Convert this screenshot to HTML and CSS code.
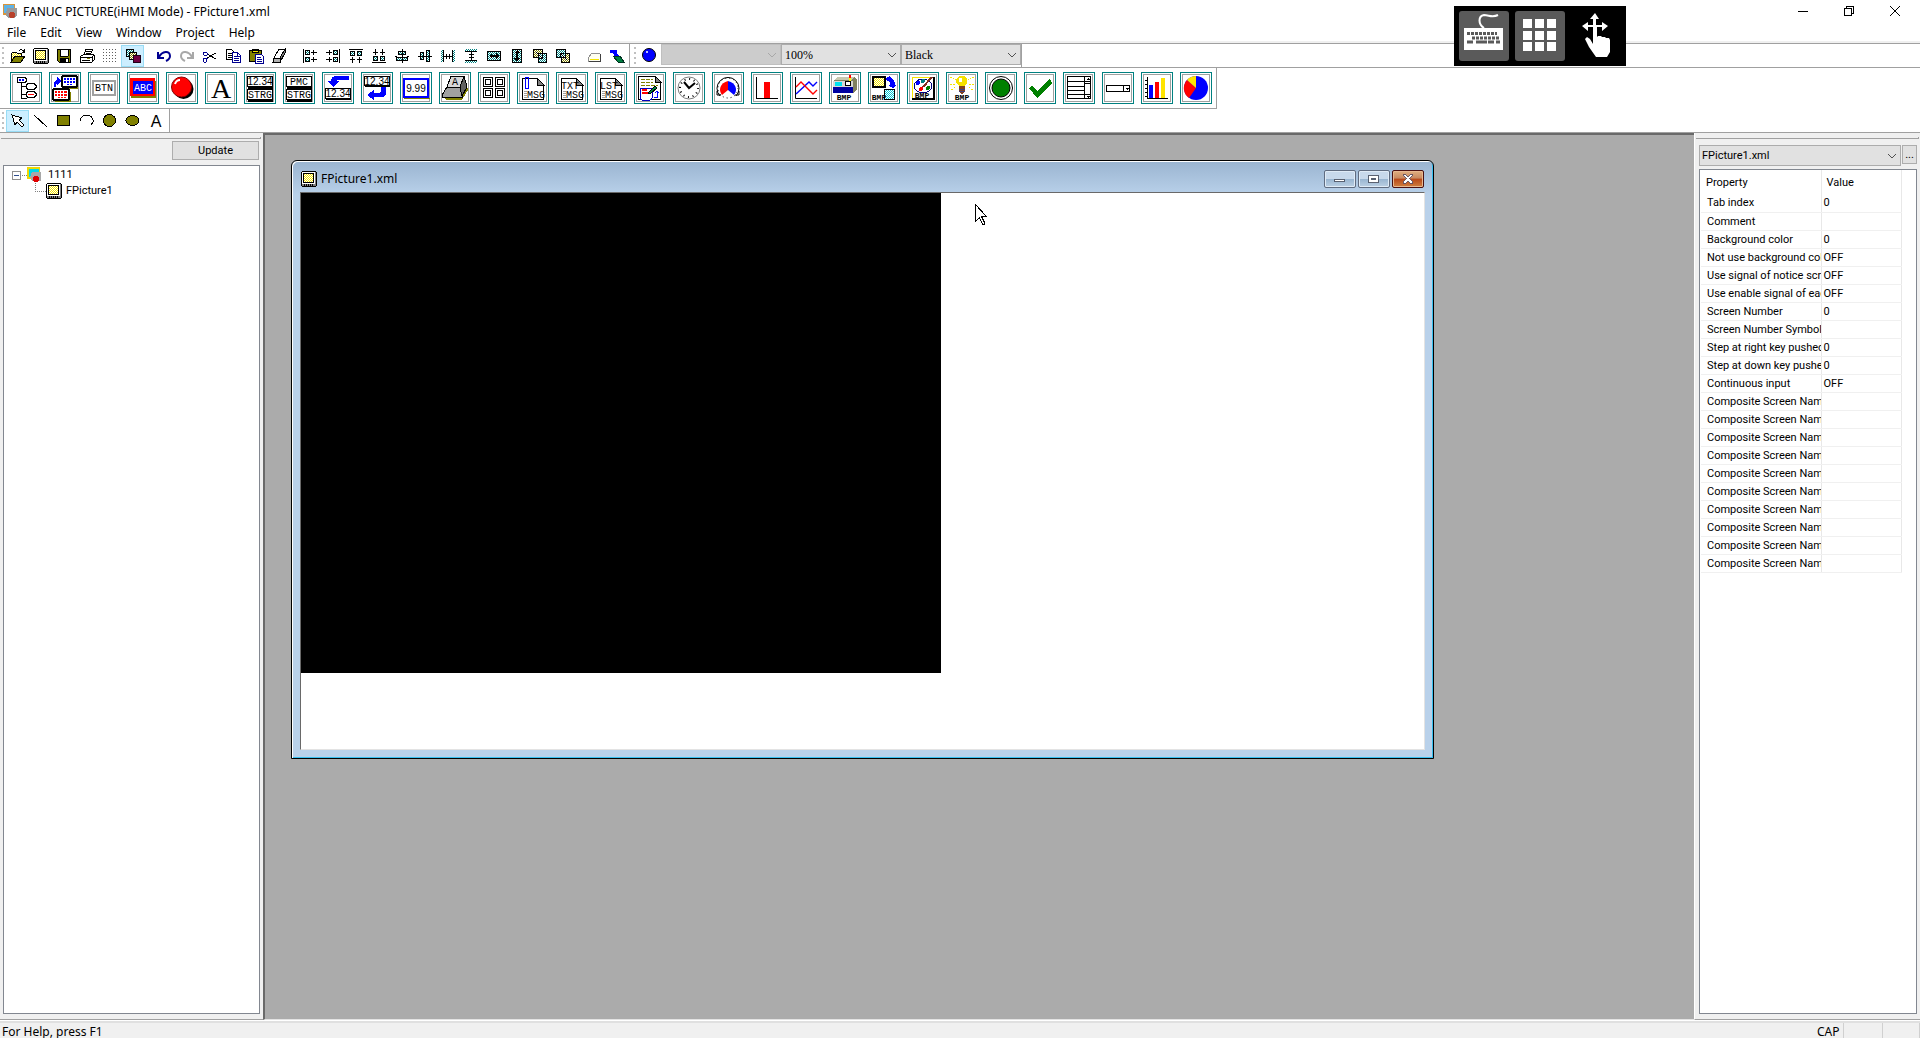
FILE: index.html
```html
<!DOCTYPE html>
<html lang="en">
<head>
<meta charset="utf-8">
<title>FANUC PICTURE(iHMI Mode) - FPicture1.xml</title>
<link rel="stylesheet" href="styles.css">
</head>
<body>
<svg class="defs" aria-hidden="true">
  <defs>
    <pattern id="teal" width="2" height="2" patternUnits="userSpaceOnUse"><rect width="2" height="2" fill="#fff"/><path d="M0 0h1v1H0zM1 1h1v1H1z" fill="#008080"/></pattern>
    <pattern id="yellow" width="2" height="2" patternUnits="userSpaceOnUse"><rect width="2" height="2" fill="#fff"/><path d="M0 0h1v1H0zM1 1h1v1H1z" fill="#f5e400"/></pattern>
    <pattern id="olive" width="2" height="2" patternUnits="userSpaceOnUse"><rect width="2" height="2" fill="#fff"/><path d="M0 0h1v1H0zM1 1h1v1H1z" fill="#808000"/></pattern>
    <pattern id="cyan" width="2" height="2" patternUnits="userSpaceOnUse"><rect width="2" height="2" fill="#fff"/><path d="M0 0h1v1H0zM1 1h1v1H1z" fill="#00c8d8"/></pattern>
    <symbol id="screen" viewBox="0 0 16 16">
      <path d="M1 0h14v1h1v14h-1v1H1v-1H0V1h1z" fill="#000"/><path d="M1 1h13v13H1z" fill="#fff"/><path d="M14 1h1v14H1v-2h13z" fill="#808080"/>
      <path d="M2 2h11v10H2z" fill="#000"/><path d="M3 3h9v8H3z" fill="url(#yellow)"/>
      <path d="M3 13h1v2H3zM5 13h1v2H5zM7 13h1v2H7zM9 13h1v2H9zM11 13h1v2h-1z" fill="#000"/>
    </symbol>
    <symbol id="page" viewBox="1 1 30 30">
      <path d="M5.500 27.500v-21h15l6 6v15z" fill="#fff" stroke="#000"/><path d="M20 6v7h7z" fill="#808080" stroke="#000"/>
      <path d="M7 19h3M7 21h3M7 23h3M7 25h3" stroke="#a0a0a0"/>
    </symbol>
  </defs>
</svg>

<div class="app">
  <header class="titlebar">
    <svg class="app-icon" viewBox="0 0 16 16"><rect x="1" y="1" width="12" height="11" fill="#d9953b"/><rect x="2" y="2" width="10" height="8" fill="#5fb3e6"/><path d="M5 5h10v8l-3 2H6l-2-3z" fill="#9a9a9a"/><circle cx="10" cy="12" r="3" fill="#b8402a"/></svg>
    <h1>FANUC PICTURE(iHMI Mode) - FPicture1.xml</h1>
    <div class="window-controls">
      <button aria-label="Minimize"><svg width="12" height="12" viewBox="0 0 12 12"><path d="M1 6.500h10" stroke="#000"/></svg></button>
      <button aria-label="Restore"><svg width="12" height="12" viewBox="0 0 12 12" fill="none" stroke="#000"><path d="M1.500 3.500h7v7h-7zM3.500 3.500v-2h7v7h-2"/></svg></button>
      <button aria-label="Close"><svg class="smooth" width="12" height="12" viewBox="0 0 12 12"><path d="M1 1l10 10M11 1L1 11" stroke="#000"/></svg></button>
    </div>
  </header>
  <nav class="menubar">
    <button>File</button><button>Edit</button><button>View</button><button>Window</button><button>Project</button><button>Help</button>
  </nav>

  <div class="toolbar standard">
    <span class="grip"></span>
    <div class="tools">
      <button aria-label="Open"><svg viewBox="0 0 16 16"><path d="M1 14V5h1l1-1h3l1 1h4v3" fill="url(#yellow)" stroke="#000"/><path d="M1 14l4-6h10l-4 6z" fill="#808000" stroke="#000"/><path d="M9 3c1-2 4-2 5 1M14.500 1v4M12 4h3" fill="none" stroke="#000"/></svg></button>
      <button aria-label="Screen"><svg viewBox="0 0 16 16"><use href="#screen"/></svg></button>
      <button aria-label="Save"><svg viewBox="0 0 16 16"><path d="M1 1h14v14H3l-2-2z" fill="#808000"/><path d="M1.500 1.500h13v13h-11l-2-2z" fill="none" stroke="#000"/><path d="M4 2h8v6H4z" fill="#fff"/><path d="M4 8h8M4 2v6M12 2v6" stroke="#000"/><path d="M4 10h9v5H4z" fill="#000"/><path d="M10 11h2v3h-2z" fill="#fff"/></svg></button>
      <button aria-label="Print"><svg viewBox="0 0 16 16"><path d="M5.500 6.500l1-5h7l-2 5z" fill="#fff" stroke="#000"/><path d="M7 3h5M7 5h4" stroke="#000"/><path d="M1.500 8.500l3-2h9l2 1v4l-3 3h-11z" fill="#fff" stroke="#000"/><path d="M1 9h12M13 9l2-2M13 9v5M3 12h8" stroke="#000"/><path d="M8 10h3v1H8z" fill="#808000"/></svg></button>
      <button aria-label="Grid"><svg viewBox="0 0 16 16"><path d="M1 1.500h15M1 4.500h15M1 7.500h15M1 10.500h15M1 13.500h15" stroke="#606060" stroke-dasharray="1 2"/></svg></button>
      <button class="active" aria-label="Layers"><svg viewBox="0 0 16 16"><path d="M1.500 1.500h7v7h-7z" fill="url(#teal)" stroke="#000"/><path d="M4.500 4.500h7v7h-7z" fill="url(#olive)" stroke="#000"/><path d="M8.500 7.500h7v7h-7z" fill="#700040" stroke="#200018"/></svg></button>
      <span class="gap"></span>
      <button aria-label="Undo"><svg class="smooth" viewBox="0 0 16 16"><path d="M2 4v6h6" fill="none" stroke="#000090" stroke-width="2"/><path d="M3 9C6 3 14 2 14 8c0 2-2 4-4 5" fill="none" stroke="#000090" stroke-width="2"/></svg></button>
      <button aria-label="Redo"><svg class="smooth" viewBox="0 0 16 16"><path d="M14 4v6H8" fill="none" stroke="#a8a8a8" stroke-width="2"/><path d="M13 9C10 3 2 2 2 8c0 2 2 4 4 5" fill="none" stroke="#a8a8a8" stroke-width="2"/></svg></button>
      <button aria-label="Cut"><svg viewBox="0 0 16 16" fill="none"><path d="M5 6l9 5M5 10l9-5" stroke="#000"/><path d="M2 4h2l2 2-1 1H2L1 6zM2 10h3v1l-1 3H2l-1-2z" stroke="#000090"/></svg></button>
      <button aria-label="Copy"><svg viewBox="0 0 16 16"><path d="M1.500 1.500h5l3 3v7h-8z" fill="#fff" stroke="#000"/><path d="M3 5h4M3 7h4M3 9h4" stroke="#000"/><path d="M7.500 4.500h5l3 3v7h-8z" fill="#fff" stroke="#000090"/><path d="M9 8h4M9 10h5M9 12h5M12 5v3h3" stroke="#000090" fill="none"/></svg></button>
      <button aria-label="Paste"><svg viewBox="0 0 16 16"><rect x="1.500" y="2.500" width="12" height="11" fill="#808000" stroke="#000"/><path d="M4 1h7v4H4z" fill="#000"/><path d="M5 3h5v1H5z" fill="#f5e400"/><path d="M7.500 6.500h6l2 2v7h-8z" fill="#fff" stroke="#000090"/><path d="M9 9h4M9 11h5M9 13h5" stroke="#000090"/></svg></button>
      <button aria-label="Erase"><svg viewBox="0 0 16 16"><path d="M3 10L8 1h6L9 10z" fill="#fff" stroke="#000"/><path d="M3 10h6v4H2z" fill="#b0b0b0" stroke="#000"/><path d="M9 10l5-9v4L9 14z" fill="#808080" stroke="#000"/></svg></button>
      <span class="gap"></span>
      <button aria-label="Align left"><svg viewBox="0 0 16 16"><path d="M1.500 1v14" stroke="#000"/><path d="M3.500 2.500h4v4h-4zM3.500 9.500h4v4h-4z" fill="url(#teal)" stroke="#000"/><path d="M9 4.500h6M9 11.500h6M11.500 2v5M11.500 9v5" stroke="#000"/></svg></button>
      <button aria-label="Align right"><svg viewBox="0 0 16 16"><path d="M14.500 1v14" stroke="#000"/><path d="M8.500 2.500h4v4h-4zM8.500 9.500h4v4h-4z" fill="url(#teal)" stroke="#000"/><path d="M1 4.500h6M1 11.500h6M4.500 2v5M4.500 9v5" stroke="#000"/></svg></button>
      <button aria-label="Align top"><svg viewBox="0 0 16 16"><path d="M1 1.500h14" stroke="#000"/><path d="M2.500 3.500h4v4h-4zM9.500 3.500h4v4h-4z" fill="url(#teal)" stroke="#000"/><path d="M4.500 9v6M11.500 9v6M2 11.500h5M9 11.500h5" stroke="#000"/></svg></button>
      <button aria-label="Align bottom"><svg viewBox="0 0 16 16"><path d="M1 14.500h14" stroke="#000"/><path d="M2.500 8.500h4v4h-4zM9.500 8.500h4v4h-4z" fill="url(#teal)" stroke="#000"/><path d="M4.500 1v6M11.500 1v6M2 4.500h5M9 4.500h5" stroke="#000"/></svg></button>
      <button aria-label="Center horizontally"><svg viewBox="0 0 16 16"><path d="M4.500 3.500h7v3h-7zM2.500 9.500h11v3h-11z" fill="url(#teal)" stroke="#000"/><path d="M8 1v14M1 8h2M13 8h2" stroke="#000"/></svg></button>
      <button aria-label="Center vertically"><svg viewBox="0 0 16 16"><path d="M3.500 4.500h3v7h-3zM9.500 2.500h3v11h-3z" fill="url(#teal)" stroke="#000"/><path d="M1 8h14" stroke="#000"/></svg></button>
      <button aria-label="Space across"><svg viewBox="0 0 16 16"><path d="M1 2h2v12H1zM13 2h2v12h-2z" fill="url(#teal)"/><path d="M3.500 2v12M12.500 2v12M4 8.500h8M6.500 6v5M9.500 6v5" stroke="#000"/></svg></button>
      <button aria-label="Space down"><svg viewBox="0 0 16 16"><path d="M2 1h12v2H2zM2 13h12v2H2z" fill="url(#teal)"/><path d="M2 3.500h12M2 12.500h12M8.500 4v8M6 6.500h5M6 9.500h5" stroke="#000"/></svg></button>
      <button aria-label="Same width"><svg viewBox="0 0 16 16"><path d="M1.500 3.500h13v9h-13z" fill="url(#teal)" stroke="#000"/><path d="M3 8l3-3v2h4V5l3 3-3 3V9H6v2z" fill="#000"/></svg></button>
      <button aria-label="Same height"><svg viewBox="0 0 16 16"><path d="M3.500 1.500h9v13h-9z" fill="url(#teal)" stroke="#000"/><path d="M8 2l3 3H9v5h2l-3 4-3-4h2V5H5z" fill="#000"/></svg></button>
      <button aria-label="Bring forward"><svg viewBox="0 0 16 16"><path d="M1.500 1.500h9v8h-9z" fill="url(#olive)" stroke="#000"/><path d="M6.500 5.500h8v9h-8z" fill="url(#teal)" stroke="#000"/><path d="M4 4l6 6M10.500 6v4.500H6" stroke="#000" fill="none"/></svg></button>
      <button aria-label="Send back"><svg viewBox="0 0 16 16"><path d="M6.500 5.500h8v9h-8z" fill="url(#olive)" stroke="#000"/><path d="M1.500 1.500h9v8h-9z" fill="url(#teal)" stroke="#000"/><path d="M5 5l7 7M5.500 9V5.500H9" stroke="#000" fill="none"/></svg></button>
      <span class="gap"></span>
      <button aria-label="Tag"><svg viewBox="0 0 16 16"><path d="M6 5h7l1 1v7H2v-3z" fill="#fffff0" stroke="#909090"/><path d="M14.500 6v7.500H3" fill="none" stroke="#404040"/><path d="M4 11h9v1H4z" fill="#f5e400"/></svg></button>
      <button aria-label="Transfer"><svg viewBox="0 0 16 16"><path d="M1 2h7v3l3 4H3l2-2-1-2H1z" fill="#0000ff"/><path d="M4 8h7l4 6H9z" fill="#008040" stroke="#003020"/></svg></button>
    </div>
    <div class="view-options">
      <span class="grip"></span>
      <button aria-label="Lamp"><svg class="smooth" viewBox="0 0 16 16"><circle cx="8" cy="8" r="6.500" fill="#0000ff" stroke="#000"/><circle cx="6" cy="5" r="1" fill="#fff"/></svg></button>
      <label class="combo disabled"><select aria-label="State" disabled><option></option></select><svg viewBox="0 0 10 6"><path d="M1 1l4 4 4-4"/></svg></label>
      <label class="combo"><select aria-label="Zoom"><option>100%</option></select><svg viewBox="0 0 10 6"><path d="M1 1l4 4 4-4"/></svg></label>
      <label class="combo"><select aria-label="Color"><option>Black</option></select><svg viewBox="0 0 10 6"><path d="M1 1l4 4 4-4"/></svg></label>
    </div>
  </div>

  <div class="toolbar parts">
    <button aria-label="Screen tree"><svg viewBox="1 1 30 30" fill="none" stroke="#000"><path d="M8 5.500h7l1 1v3l-1 1H8l-1-1v-3zM11.500 11v15h5M11.500 14.500h4M11.500 22h4"/><path d="M9 7h2v2H9zM12 7h2v2h-2z" fill="#00f" stroke="none"/><path d="M18 11.500h6l2 2v2l-2 2h-6l-2-2v-2zM18 19.500h6l2 2v2l-2 2h-6l-2-2v-2z" fill="#fff"/><path d="M18 22.500h6" stroke="#f00"/></svg></button>
    <button aria-label="Screen switch"><svg viewBox="1 1 30 30"><path d="M14 6h15v11H14zM6 20h16v10H6z" fill="#808000"/><rect x="13" y="4" width="15" height="11" rx="2" fill="#fff" stroke="#000" stroke-width="2"/><path d="M15 6h11v2H15zM15 9h11v2H15zM17 12h7v1h-7z" fill="#00f"/><path d="M17.500 5v9M20.500 5v9M23.500 5v9" stroke="#fff"/><rect x="4" y="17" width="16" height="11" rx="2" fill="#fff" stroke="#000" stroke-width="2"/><path d="M6 19h12v2H6zM6 22h12v2H6zM8 25h9v1H8z" fill="#f00"/><path d="M8.500 18v9M11.500 18v9M14.500 18v9" stroke="#fff"/><path d="M5 15v-5l2-2h1V5l4 4-4 4v-2l-1 1v3z" fill="#00f"/></svg></button>
    <button aria-label="Button"><svg viewBox="1 1 30 30"><path d="M5 9h22v14H5z" fill="#fff" stroke="#a0a0a0" stroke-width="2"/><text x="16" y="19">BTN</text></svg></button>
    <button aria-label="Label"><svg viewBox="1 1 30 30"><path d="M4 9h25v17H4z" fill="#808000"/><path d="M3 6h25v18H3z" fill="#f00"/><path d="M6 9h20v13H6z" fill="#00f"/><text x="16" y="19" class="light">ABC</text></svg></button>
    <button aria-label="Lamp"><svg class="smooth" viewBox="1 1 30 30"><circle cx="17.500" cy="17" r="10" fill="#000"/><circle cx="15.500" cy="15" r="10" fill="#f00" stroke="#800"/><path d="M9 12c1-3 3-4 5-4" stroke="#fff" stroke-width="2" fill="none"/></svg></button>
    <button aria-label="Text"><svg viewBox="1 1 30 30"><text x="16" y="26" class="serif">A</text></svg></button>
    <button aria-label="Numeric string"><svg viewBox="1 1 30 30"><path d="M3.500 4.500h25v10h-25zM3.500 17.500h25v10h-25z" fill="#fff" stroke="#000"/><path d="M4 16h25M4 29h25" stroke="#000" stroke-width="2"/><text x="16" y="13" class="num">12.34</text><text x="16" y="26">STRG</text></svg></button>
    <button aria-label="PMC string"><svg viewBox="1 1 30 30"><path d="M3.500 4.500h25v10h-25zM3.500 17.500h25v10h-25z" fill="#fff" stroke="#000"/><path d="M4 16h25M4 29h25" stroke="#000" stroke-width="2"/><text x="16" y="13">PMC</text><text x="16" y="26">STRG</text></svg></button>
    <button aria-label="Numeric input"><svg viewBox="1 1 30 30"><path d="M27 4H15c-4 0-6 2-6 5H6l5 6 6-6h-3l2-1h11z" fill="#00f"/><path d="M3.500 16.500h25v10h-25z" fill="#fff" stroke="#000"/><path d="M4 27.500h25" stroke="#000"/><text x="16" y="25" class="num">12.34</text></svg></button>
    <button aria-label="Numeric output"><svg viewBox="1 1 30 30"><path d="M3.500 4.500h25v9h-25z" fill="#fff" stroke="#000"/><path d="M4 14.500h25" stroke="#000"/><text x="16" y="13" class="num">12.34</text><path d="M25 15v6c0 3-2 4-4 4h-8v3l-7-5 7-5v3h6l1-2v-4z" fill="#00f"/></svg></button>
    <button aria-label="Numeric display"><svg viewBox="1 1 30 30"><path d="M4 26h26v1H4z" fill="#808000"/><path d="M4 7h24v18H4z" fill="#fff" stroke="#00f" stroke-width="2"/><text x="16" y="20" class="num">9.99</text></svg></button>
    <button aria-label="Key"><svg viewBox="1 1 30 30"><path d="M6 25l20-19 3 12-6 10H7z" fill="#808000"/><path d="M3 23l5-8h13l2 8v2H3z" fill="#a0a0a0" stroke="#000"/><path d="M8 15l4-11h13l-4 11z" fill="#d8d8d8" stroke="#000"/><path d="M21 15l4-11 3 11-5 9z" fill="#606060" stroke="#000"/><text x="16" y="13">A</text></svg></button>
    <button aria-label="Key pad"><svg viewBox="1 1 30 30" fill="none" stroke="#000"><path d="M5.500 5.500h9v9h-9zM7.500 7.500h5v5h-5zM17.500 5.500h9v9h-9zM19.500 7.500h5v5h-5zM5.500 16.500h9v9h-9zM7.500 18.500h5v5h-5zM17.500 16.500h9v9h-9zM19.500 18.500h5v5h-5z"/></svg></button>
    <button aria-label="Attached message"><svg viewBox="1 1 30 30"><use href="#page" x="1" y="1" width="30" height="30"/><path d="M8.500 8v8h3V5h-3v3M11 16h-3" fill="none" stroke="#00f"/><text x="19" y="26">MSG</text></svg></button>
    <button aria-label="Text message"><svg viewBox="1 1 30 30"><use href="#page" x="1" y="1" width="30" height="30"/><text x="14" y="17">TXT</text><text x="19" y="26">MSG</text></svg></button>
    <button aria-label="List message"><svg viewBox="1 1 30 30"><use href="#page" x="1" y="1" width="30" height="30"/><text x="14" y="17">LST</text><text x="19" y="26">MSG</text></svg></button>
    <button aria-label="Memo"><svg viewBox="1 1 30 30"><path d="M4.500 27V4.500h17l5 5V27z" fill="#fff" stroke="#000"/><path d="M21 4v6h6z" fill="#808080" stroke="#000"/><path d="M7 7.500h12M7 10.500h12M7 13.500h17" stroke="#808000" stroke-dasharray="4 1"/><rect x="6" y="16" width="12" height="12" rx="2" fill="#fff" stroke="#0000c0"/><path d="M8 18h5M8 21h8" stroke="#f00" stroke-width="2"/><path d="M14 21l7-7 2 2-7 6z" fill="#008040" stroke="#000"/><path d="M20 25.500h3.500V19M21 21l2-2 2 2" stroke="#00f" fill="none"/></svg></button>
    <button aria-label="Clock"><svg class="smooth" viewBox="1 1 30 30" fill="none"><circle cx="16" cy="16" r="11" stroke="#808080"/><circle cx="16" cy="16" r="9" stroke="#000" stroke-width="2" stroke-dasharray="1 3.700"/><path d="M11 10l5 6 6-5" stroke="#000" stroke-width="2"/></svg></button>
    <button aria-label="Meter"><svg class="smooth" viewBox="1 1 30 30"><path d="M8 24a11 11 0 1 1 16 0" fill="#fff" stroke="#000"/><circle cx="16" cy="16" r="10" fill="none" stroke="#000" stroke-dasharray="1 3"/><path d="M16 18l-6 5c-4-5-2-12 6-14z" fill="#f00"/><path d="M16 18l6 5c4-5 2-12-6-14z" fill="#00f"/><path d="M5 19v4h4M23 23h4v-4" fill="none" stroke="#000"/></svg></button>
    <button aria-label="Bar graph"><svg viewBox="1 1 30 30"><path d="M5.500 5v21.500H27" fill="none" stroke="#000"/><path d="M13 10h6v16h-6z" fill="#f00"/></svg></button>
    <button aria-label="Trend graph"><svg class="smooth" viewBox="1 1 30 30" fill="none"><path d="M5.500 5v21.500H27" stroke="#000"/><path d="M6 22l13-12 4 4 4-4" stroke="#00f" stroke-width="1.400"/><path d="M6 15l5-5 12 12 4-4" stroke="#f00" stroke-width="1.400"/></svg></button>
    <button aria-label="Machine bitmap"><svg viewBox="1 1 30 30"><path d="M4 9l4-4h18l2 3v9l-4 4H4z" fill="#808060"/><path d="M5 8l3-3h17l-2 3z" fill="#c8c8b0"/><path d="M4 9h20v6H4z" fill="#d8d8d8"/><path d="M4 15h20v6H4z" fill="#0000a0"/><path d="M6 10h7v4H6z" fill="#00e0f0"/><path d="M16.500 9.500h5v4h-5z" fill="#fff" stroke="#000"/><path d="M20 3h2v3h-2z" fill="#f00"/><path d="M20 6h2v3h-2z" fill="#ff0"/><text x="15" y="28" class="tiny">BMP</text></svg></button>
    <button aria-label="Bitmap switch"><svg viewBox="1 1 30 30"><path d="M5 5h12v10H5z" fill="url(#yellow)" stroke="#000" stroke-width="2"/><path d="M16.500 17.500h10v10h-10z" fill="url(#cyan)" stroke="#000"/><path d="M17 7l5-3 1 2c3 2 4 4 4 7h2l-4 3-5-3h2c0-3-1-4-3-4z" fill="#00f"/><text x="11" y="28" class="tiny">BMP</text></svg></button>
    <button aria-label="Paint bitmap"><svg viewBox="1 1 30 30"><path d="M5 27V5h22" stroke="#f5e400" fill="none"/><path d="M27 5v22H5" stroke="#000" stroke-width="2" fill="none"/><ellipse cx="16" cy="14" rx="9" ry="7" fill="#fff" stroke="#000080"/><circle cx="11" cy="11" r="2" fill="#00f"/><circle cx="14" cy="17" r="2" fill="#f00"/><circle cx="16" cy="9" r="2" fill="#008080"/><circle cx="21" cy="16" r="2" fill="#008000"/><path d="M16 15l9-10" stroke="#803020" stroke-width="2"/><text x="15" y="26" class="tiny">BMP</text></svg></button>
    <button aria-label="Lamp bitmap"><svg viewBox="1 1 30 30"><path d="M4 5l6 3M4 12h5M5 18l5-3M28 5l-6 3M28 12h-5M27 18l-5-3" stroke="#f5e400" stroke-dasharray="2 1"/><path d="M13 4h5l3 3v4l-4 4h-3l-4-4V7z" fill="#f5e000"/><path d="M13 6h3v4h-3z" fill="#fff"/><path d="M13 14h6v6h-1l-1 2h-2l-2-2z" fill="#804020"/><path d="M13 17h6M13 19h6" stroke="#404080"/><text x="16" y="28" class="tiny">BMP</text></svg></button>
    <button aria-label="Round button"><svg class="smooth" viewBox="1 1 30 30"><circle cx="16" cy="16" r="11.500" fill="#fff" stroke="#000"/><circle cx="16" cy="16" r="9" fill="#008000" stroke="#000"/></svg></button>
    <button aria-label="Check box"><svg viewBox="1 1 30 30"><path d="M5 16l3-2 5 5L26 7l2 4-14 15h-1z" fill="#008000"/></svg></button>
    <button aria-label="List box"><svg viewBox="1 1 30 30" fill="none" stroke="#000"><path d="M4.500 4.500h23v22h-23zM4 9.500h18M4 14.500h18M4 18.500h18M4 22.500h18M21.500 4v23M22 9.500h6M22 22.500h6M22 11.500h6"/><path d="M23 8l2-2 2 2zM23 24h4l-2 2z" fill="#000" stroke="none"/></svg></button>
    <button aria-label="Combo box"><svg viewBox="1 1 30 30" fill="none" stroke="#000"><path d="M4.500 13.500h23v6h-23zM21.500 13v7"/><path d="M23 16h4l-2 2z" fill="#000" stroke="none"/></svg></button>
    <button aria-label="Multi bar graph"><svg viewBox="1 1 30 30"><path d="M6.500 5v21.500H27M4 8.500h2M4 12.500h2M4 16.500h2M4 20.500h2M4 24.500h2" fill="none" stroke="#000"/><path d="M8 13h4v13H8z" fill="#00f"/><path d="M14 10h4v16h-4z" fill="#f00"/><path d="M20 6h4v20h-4z" fill="#ffe400"/></svg></button>
    <button aria-label="Pie graph"><svg class="smooth" viewBox="1 1 30 30"><circle cx="16" cy="16" r="12" fill="#00f"/><path d="M16 16l-7 10A12 12 0 0 1 7 8z" fill="#f00"/><path d="M16 16L7 8a12 12 0 0 1 9-4z" fill="#ffe400"/></svg></button>
  </div>

  <div class="toolbar drawing">
    <span class="grip"></span>
    <div class="tools">
      <button class="active" aria-label="Select"><svg viewBox="0 0 16 16"><path d="M2 2l10 3-3 2 5 5-2 2-5-5-2 3z" fill="#fff" stroke="#000"/></svg></button>
      <button aria-label="Line"><svg viewBox="0 0 16 16"><path d="M1 2l13 12" stroke="#000"/></svg></button>
      <button aria-label="Rectangle"><svg viewBox="0 0 16 16"><path d="M1.500 2.500h12v10h-12z" fill="#808000" stroke="#000"/></svg></button>
      <button aria-label="Arc"><svg viewBox="0 0 16 16"><path d="M1 8c1-7 11-8 13-1v2l-2 3" fill="none" stroke="#000"/></svg></button>
      <button aria-label="Circle"><svg viewBox="0 0 16 16"><circle cx="7.500" cy="7.500" r="6" fill="#808000" stroke="#000"/></svg></button>
      <button aria-label="Ellipse"><svg viewBox="0 0 16 16"><ellipse cx="7.500" cy="7.500" rx="6.500" ry="5" fill="#808000" stroke="#000"/></svg></button>
      <button aria-label="Text"><svg viewBox="0 0 16 16"><text x="8" y="14" class="glyph">A</text></svg></button>
    </div>
  </div>

  <main class="workspace">
    <aside class="panel project">
      <div class="dock-grip"></div>
      <div class="panel-head"><button class="update">Update</button></div>
      <ul class="tree">
        <li>
          <div class="node"><svg width="31" height="16" viewBox="0 0 31 16"><rect x=".5" y="4.500" width="8" height="8" fill="#fff" stroke="#909090"/><path d="M2 8.500h5" stroke="#305090"/><path d="M10 8.500h5" stroke="#808080" stroke-dasharray="1 1"/><rect x="15" y="0" width="13" height="12" fill="#f0d800"/><rect x="17" y="2" width="10" height="8" fill="#00d8e8"/><path d="M20 5h9v9h-9l-2-4z" fill="#a8a8a8"/><circle cx="24" cy="12" r="3" fill="#e00000"/></svg>1111</div>
          <ul>
            <li class="node"><svg width="27" height="16" viewBox="0 0 27 16"><path d="M.5 0v8M0 8.500h11" fill="none" stroke="#808080" stroke-dasharray="1 1"/><use href="#screen" x="11" width="16" height="16"/></svg>FPicture1</li>
          </ul>
        </li>
      </ul>
    </aside>

    <section class="desktop">
      <div class="child">
        <div class="child-title">
          <svg width="16" height="16" viewBox="0 0 16 16"><use href="#screen"/></svg>
          <h2>FPicture1.xml</h2>
          <div class="child-controls">
            <button aria-label="Minimize window"><svg viewBox="0 0 32 17"><path d="M10.500 8.500h10v3h-10z" fill="#fff" stroke="#505868"/></svg></button>
            <button aria-label="Maximize window"><svg viewBox="0 0 32 17"><path d="M10.500 4.500h10v8h-10z" fill="#fff" stroke="#505868"/><path d="M13.500 7.500h4v2h-4z" fill="#b0c8e0" stroke="#505868"/></svg></button>
            <button class="close" aria-label="Close window"><svg viewBox="0 0 32 17"><path d="M11 4h3l2 2 2-2h3v1l-3 3 3 3v2h-3l-2-2-2 2h-3v-2l3-3-3-3z" fill="#fff" stroke="#605060"/></svg></button>
          </div>
        </div>
        <div class="client"><div class="screen"></div></div>
      </div>
      <svg class="pointer" width="13" height="22" viewBox="0 0 13 22"><path d="M.5.5v17l4-4 3 7h2v-2l-3-6h5z" fill="#fff" stroke="#000"/></svg>
    </section>

    <aside class="panel properties">
      <div class="dock-grip"></div>
      <div class="picker">
        <label class="combo"><select aria-label="Object"><option>FPicture1.xml</option></select><svg viewBox="0 0 10 6"><path d="M1 1l4 4 4-4"/></svg></label>
        <button class="more" aria-label="More">...</button>
      </div>
      <div class="list">
        <table>
          <colgroup><col class="name-col"><col class="value-col"></colgroup>
          <thead><tr><th scope="col">Property</th><th scope="col">Value</th></tr></thead>
          <tbody>
            <tr><td>Tab index</td><td>0</td></tr>
            <tr><td>Comment</td><td></td></tr>
            <tr><td>Background color</td><td>0</td></tr>
            <tr><td>Not use background color</td><td>OFF</td></tr>
            <tr><td>Use signal of notice screen</td><td>OFF</td></tr>
            <tr><td>Use enable signal of each</td><td>OFF</td></tr>
            <tr><td>Screen Number</td><td>0</td></tr>
            <tr><td>Screen Number Symbol</td><td></td></tr>
            <tr><td>Step at right key pushed</td><td>0</td></tr>
            <tr><td>Step at down key pushed</td><td>0</td></tr>
            <tr><td>Continuous input</td><td>OFF</td></tr>
            <tr><td>Composite Screen Name</td><td></td></tr>
            <tr><td>Composite Screen Name</td><td></td></tr>
            <tr><td>Composite Screen Name</td><td></td></tr>
            <tr><td>Composite Screen Name</td><td></td></tr>
            <tr><td>Composite Screen Name</td><td></td></tr>
            <tr><td>Composite Screen Name</td><td></td></tr>
            <tr><td>Composite Screen Name</td><td></td></tr>
            <tr><td>Composite Screen Name</td><td></td></tr>
            <tr><td>Composite Screen Name</td><td></td></tr>
            <tr><td>Composite Screen Name</td><td></td></tr>
          </tbody>
        </table>
      </div>
    </aside>
  </main>

  <footer class="statusbar"><span class="hint">For Help, press F1</span><span class="cap">CAP</span><span class="cell"></span><span class="cell"></span></footer>
</div>

<div class="touch-bar">
  <button aria-label="Keyboard"><svg class="smooth" viewBox="0 0 50 50"><path d="M25 17c-6-4-6-12 0-13 5 0 8 3 14 0" fill="none" stroke="#fff" stroke-width="2"/><path d="M5 17h39v22H5z" fill="#fff"/><path d="M8 22.500h30M13 27h28" stroke="#5a5a5a" stroke-width="3" stroke-dasharray="3 1"/><path d="M8 31h6M17 31h11M29 31h6M37 31h4" stroke="#5a5a5a" stroke-width="3"/></svg></button>
  <button aria-label="Grid keypad"><svg viewBox="0 0 50 50"><path d="M8 8h9v9H8zM20 8h9v9h-9zM32 8h9v9h-9zM8 20h9v9H8zM20 20h9v9h-9zM32 20h9v9h-9zM8 31h9v9H8zM20 31h9v9h-9zM32 31h9v9h-9z" fill="#fff"/></svg></button>
  <button class="plain" aria-label="Touch move"><svg class="smooth" viewBox="0 0 50 50" fill="#fff"><path d="M24 2l4 6h-3v6h6v-3l6 4-6 5v-4h-5v10l1-1h3l1 1h3l1 1h3l1 2v12l-3 5H25L18 36l-4-8 2-2 3 2 3 5V16h-5v4l-6-5 6-4v3h5V8h-3z"/></svg></button>
</div>
</body>
</html>
```
FILE: styles.css
```css
* { box-sizing: border-box; }
body { margin: 0; color: #000; font: 12px/16px "Noto Sans", sans-serif; background: #fff; }
button { margin: 0; padding: 0; border: 0; background: none; color: inherit; font: inherit; }
svg { display: block; shape-rendering: crispEdges; }
svg.smooth { shape-rendering: auto; }
.defs { position: absolute; width: 0; height: 0; }
h1, h2 { margin: 0; font: inherit; }

.app { display: flex; flex-direction: column; min-height: 100vh; }

/* Title and menu */
.titlebar { display: flex; align-items: center; height: 22px; padding-left: 2px; }
.app-icon { width: 16px; height: 16px; }
.titlebar h1 { margin-left: 5px; font-size: 12px; line-height: 22px; padding-top: 1px; }
.window-controls { display: flex; margin-left: auto; padding-right: 2px; }
.window-controls button { display: grid; place-items: center; width: 46px; height: 20px; }
.menubar { display: flex; height: 22px; padding-left: 7px; gap: 14px; line-height: 22px; border-bottom: 1px solid #a0a0a0; box-shadow: inset 0 -2px #f0f0f0; }

/* Toolbars */
.toolbar { display: flex; align-items: center; border-bottom: 1px solid #a0a0a0; }
.grip { flex: none; width: 2px; height: 18px; margin-left: 2px; background: repeating-linear-gradient(#c0c0c0 0 2px, transparent 2px 5px); }
.tools { display: flex; }
.tools button, .view-options button { display: grid; place-items: center; width: 23px; height: 22px; }
.tools svg, .view-options button svg { width: 16px; height: 16px; }
.tools .active { background: #cceeff; border: 1px solid #99dcf5; }
.gap { width: 8px; }
.standard { height: 24px; }
.standard .tools { padding: 0 1px 0 2px; }
.view-options { display: flex; align-items: flex-start; height: 23px; border-left: 1px solid #a0a0a0; padding-left: 2px; border-right: 1px solid #a0a0a0; }
.view-options .grip { margin-top: 3px; }
.view-options > button { margin: 0 1px; }
.view-options .combo { width: 120px; height: 21px; font-family: "Liberation Serif", serif; }

.combo { display: grid; align-items: center; }
.combo > * { grid-area: 1 / 1; }
.combo select { width: 100%; height: 100%; padding: 0 20px 0 3px; border: 1px solid #acacac; border-radius: 0; appearance: none; background: #e1e1e1; color: #000; font: inherit; }
.combo svg { justify-self: end; width: 10px; height: 6px; margin-right: 4px; fill: none; stroke: #505050; pointer-events: none; shape-rendering: auto; }
.combo.disabled select { background: #cccccc; border-color: #bfbfbf; opacity: 1; }
.combo.disabled svg { stroke: #a8a8a8; }

.parts { height: 41px; gap: 7px; padding-left: 10px; align-self: flex-start; padding-right: 4px; border-right: 1px solid #a0a0a0; }
.parts button { flex: none; width: 32px; height: 32px; border: 1px solid #008080; box-shadow: inset 0 0 0 1px #fff, inset 0 0 0 2px #a0a0a0; }
.parts svg { width: 30px; height: 30px; }
.parts text { text-anchor: middle; font-family: "Liberation Mono", monospace; font-size: 10px; fill: #000; stroke: none; }
.parts .light { fill: #fff; }
.parts .serif { font-family: "Liberation Serif", serif; font-size: 28px; }
.parts .num { font-family: "Liberation Sans", sans-serif; }
.parts .tiny { font-size: 8px; font-weight: bold; }
.glyph { text-anchor: middle; font-family: "Liberation Sans", sans-serif; font-size: 16px; }

.drawing { height: 24px; }
.drawing .tools { height: 23px; padding: 1px 2px 0 2px; border-right: 1px solid #a0a0a0; }

/* Work area */
.workspace { display: flex; flex: 1; }
.panel { display: flex; flex-direction: column; flex: none; background: #f0f0f0; border-bottom: 1px solid #a0a0a0; font-family: Roboto, sans-serif; }
.dock-grip { height: 2px; margin: 4px 2px 0 1px; border: 1px solid #a0a0a0; border-width: 0 1px 1px 0; }
.project { width: 263px; padding-bottom: 5px; }
.panel-head { display: flex; justify-content: flex-end; padding: 2px 4px 5px; }
.update { width: 87px; height: 19px; border: 1px solid #adadad; background: #e1e1e1; font-size: 11px; line-height: 17px; }
ul { margin: 0; padding: 0; list-style: none; }
.tree { flex: 1; margin: 0 3px; padding: 1px 8px; border: 1px solid #828790; background: #fff; font-size: 11px; }
.node { display: flex; align-items: center; gap: 5px; height: 16px; }
.tree ul { padding-left: 23px; }
.tree ul .node { gap: 4px; }

.desktop { position: relative; flex: 1; overflow: hidden; background: #ababab; border-top: 2px solid #696969; border-left: 2px solid #696969; border-bottom: 1px solid #e3e3e3; }
.child { position: absolute; left: 26px; top: 25px; display: flex; flex-direction: column; width: 1143px; height: 599px; padding: 1px 8px 8px; border: 1px solid #000; border-radius: 6px 6px 0 0; background: linear-gradient(#9ab4d0, #b9d1ea 34px); box-shadow: inset 1px 1px #fff, inset -1px -1px #38c0f0; }
.child-title { display: flex; align-items: center; height: 30px; gap: 4px; padding-top: 4px; }
.child-title h2 { font-size: 12px; }
.child-title > svg { margin-left: 1px; }
.child-controls { display: flex; gap: 2px; margin-left: auto; padding-right: 1px; }
.child-controls button { width: 32px; height: 18px; border: 1px solid #606c80; border-radius: 2px; background: linear-gradient(#c8d9eb 50%, #98b4d0 50%, #bcd0e4); box-shadow: inset 0 0 0 1px #e0ebf6; }
.child-controls svg { width: 30px; height: 16px; }
.child-controls .close { border-color: #4a1010; background: linear-gradient(#e0b080, #c88860 45%, #b84818 50%, #d08040); box-shadow: inset 0 0 0 1px #e8b890; }
.client { flex: 1; border: 1px solid #696969; border-right-color: #e3e3e3; border-bottom-color: #e3e3e3; background: #fff; }
.screen { width: 640px; height: 480px; background: #000; }
.pointer { position: absolute; left: 710px; top: 69px; }

.properties { width: 226px; padding: 0 3px 5px 4px; border-left: 1px solid #fff; }
.properties .dock-grip { margin: 4px -2px 0 -3px; }
.picker { display: flex; gap: 1px; padding: 6px 0 3px; font-size: 11px; }
.picker .combo { flex: 1; height: 21px; }
.picker .combo select { padding-left: 2px; }
.more { width: 15px; height: 19px; border: 1px solid #adadad; background: #e1e1e1; }
.list { flex: 1; border: 1px solid #828790; background: #fff; font-size: 11px; padding: 0 1px; }
table { width: 201px; table-layout: fixed; border-collapse: collapse; }
.name-col { width: 120px; }
th, td { overflow: hidden; white-space: nowrap; text-align: left; font-weight: normal; line-height: 16px; border-right: 1px solid #e8e8e8; }
th { height: 24px; padding: 1px 5px 0; }
td { height: 18px; padding: 1px 0 0 6px; border-bottom: 1px solid #f0f0f0; }
td + td { padding-left: 2px; }

.statusbar { display: flex; height: 17px; padding-left: 2px; background: #f0f0f0; border-top: 2px solid #e0e0e0; line-height: 18px; box-shadow: 0 -1px #fff; margin-top: 1px; }
.hint { flex: 1; }
.cap { width: 26px; }
.cell { width: 39px; border-left: 1px solid #d0d0d0; }
.cell:last-child { width: 38px; border-right: 1px solid #d0d0d0; }

/* Floating touch keyboard launcher */
.touch-bar { position: absolute; top: 6px; right: 294px; display: flex; gap: 6px; padding: 5px; width: 172px; height: 60px; background: #000; }
.touch-bar button { width: 50px; height: 50px; border-radius: 3px; background: #5a5a5a; }
.touch-bar .plain { background: none; }
```
